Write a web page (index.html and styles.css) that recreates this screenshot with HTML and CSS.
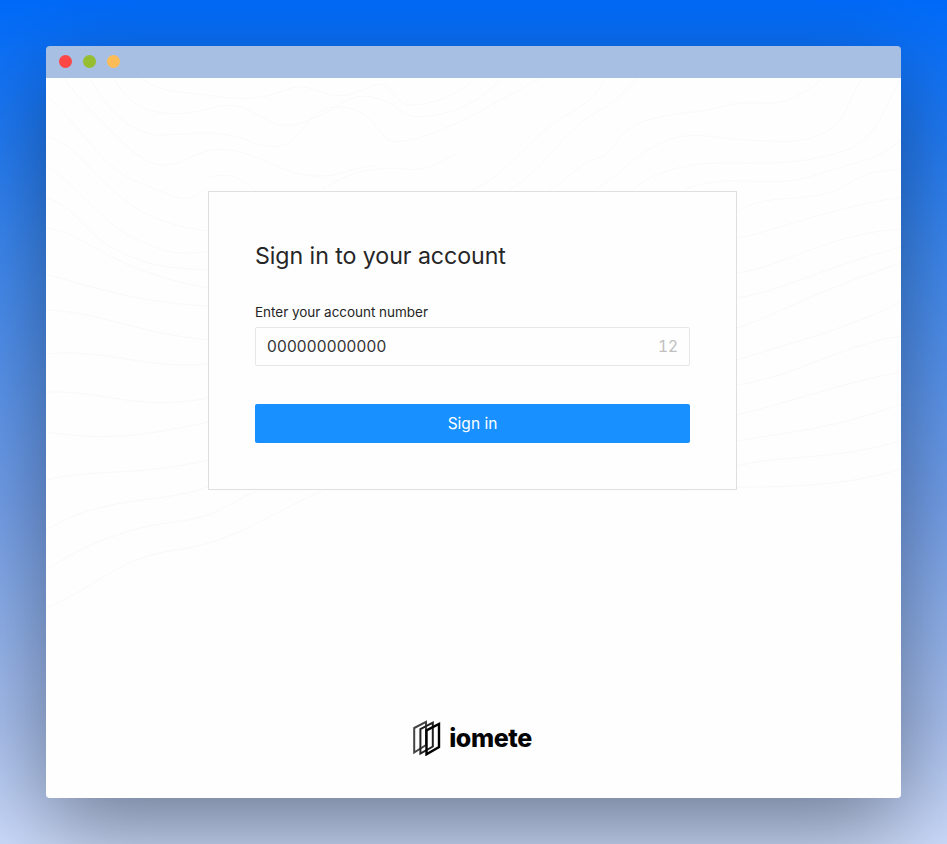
FILE: index.html
```html
<!DOCTYPE html>
<html lang="en">
<head>
<meta charset="utf-8">
<title>Sign in</title>
<link rel="stylesheet" href="styles.css">
</head>
<body>
<div class="window">
  <header class="titlebar">
    <span class="dot red"></span><span class="dot green"></span><span class="dot yellow"></span>
  </header>
  <main class="page">
    <svg class="contours" viewBox="0 0 855 720" aria-hidden="true">
      <path d="M0 17C45 60 55 90 94 105S140 128 162 109"/>
      <path d="M0 58C28 66 40 88 60 106S100 145 162 153"/>
      <path d="M0 88C36 110 54 145 90 161S130 176 162 174"/>
      <path d="M0 120C30 127 40 158 72 173S120 190 162 192"/>
      <path d="M0 150C45 156 55 190 162 210"/>
      <path d="M0 196C50 210 90 224 162 228"/>
      <path d="M0 232C50 233 90 255 162 262"/>
      <path d="M0 276C60 270 100 292 162 286"/>
      <path d="M0 314C60 312 90 334 162 320"/>
      <path d="M0 354C55 362 90 360 162 344"/>
      <path d="M0 402C50 390 90 399 162 382"/>
      <path d="M0 452C60 416 110 427 162 409"/>
      <path d="M0 492C40 466 80 450 128 444S180 426 210 413"/>
      <path d="M0 530C50 510 70 480 130 472S220 437 276 413"/>
      <path d="M18 0C35 24 62 51 83 70S121 91 139 82S174 66 204 77S246 98 272 98S300 91 330 87"/>
      <path d="M44 0C58 28 85 57 113 57S149 53 176 56S213 72 235 68S260 30 290 29S330 50 340 60S390 58 444 28S480 7 498 0"/>
      <path d="M68 0C83 30 108 38 140 35S181 19 210 36S247 49 271 39S302 13 330 20S352 42 383 38S433 23 456 0"/>
      <path d="M96 0C115 16 137 13 161 17S206 23 228 16S251 5 276 14S311 13 329 7S346 28 367 27S412 17 430 0"/>
      <path d="M160 101C184 91 196 103 209 112M276 112C301 93 334 88 360 91S394 81 412 76"/>
      <path d="M426 112C466 94 482 59 519 38S550 12 560 0"/>
      <path d="M462 112C500 92 511 58 546 37S574 16 592 0"/>
      <path d="M503 112C520 103 533 85 552 80S569 51 602 42S650 36 678 28S728 32 751 18S770 7 776 0"/>
      <path d="M548 112C576 97 586 77 617 64S667 61 700 62S752 67 778 55S800 20 817 0"/>
      <path d="M587 112C608 92 643 85 680 85S748 87 788 76S830 47 855 0"/>
      <path d="M638 112C679 93 725 112 767 98S833 82 855 62"/>
      <path d="M691 133C729 112 766 128 800 107S839 96 855 91"/>
      <path d="M691 160C735 152 770 133 855 119M691 195C740 188 780 156 855 151"/>
      <path d="M691 220C739 212 767 193 855 169M691 250C731 237 765 215 855 185"/>
      <path d="M691 282C739 266 794 254 855 224M691 307C747 299 799 266 855 258"/>
      <path d="M691 337C745 324 795 305 855 294M691 363C750 353 790 350 855 326"/>
      <path d="M691 388C740 376 785 383 855 363M635 413C700 404 770 417 855 391"/>
    </svg>
    <form class="card">
      <h1>Sign in to your account</h1>
      <label for="account">Enter your account number</label>
      <div class="field">
        <input id="account" type="text" value="000000000000"><span>12</span>
      </div>
      <button type="button">Sign in</button>
    </form>
    <div class="brand">
      <svg class="mark" viewBox="0 0 28 36" aria-hidden="true">
        <path class="back" d="M1.2 8 13 1.8V25L1.2 32.5Z"/>
        <path class="middle" d="M7.4 9.2 19.8 2.6V26.5L7.4 33.5Z"/>
        <path class="front" d="M13.5 10.4 26 4V27L13.5 34.3Z"/>
      </svg>
      <span>iomete</span>
    </div>
  </main>
</div>
</body>
</html>
```
FILE: styles.css
```css
* { box-sizing: border-box; }
body {
  margin: 0;
  height: 844px;
  padding: 46px;
  overflow: hidden;
  font-family: Inter, sans-serif;
  background: linear-gradient(#006af8 0%, #3d88ef 30%, #739fe9 60%, #a6bfee 85%, #cbdafa 100%);
}
.window {
  width: 855px;
  height: 752px;
  border-radius: 4px;
  overflow: hidden;
  box-shadow: 0 30px 90px rgba(0, 0, 0, .4);
}
.titlebar {
  height: 32px;
  padding: 0 13px 1px;
  display: flex;
  align-items: center;
  gap: 11px;
  background: #a6bfe2;
}
.dot { width: 13px; height: 13px; border-radius: 50%; }
.red { background: #fc4744; }
.green { background: #97be30; }
.yellow { background: #febc57; }
.page {
  position: relative;
  height: 720px;
  padding-top: 113px;
  display: flex;
  flex-direction: column;
  align-items: center;
  background: #fefefe;
}
.contours {
  position: absolute;
  inset: 0;
  width: 855px;
  height: 720px;
  fill: none;
  stroke: #f9f9f9;
}
.card {
  position: relative;
  width: 529px;
  height: 299px;
  margin-right: 2px;
  padding: 48px 46px 0;
  border: 1px solid #dfdfdf;
  background: #fefefe;
}
h1 {
  margin: 0;
  font-size: 23.2px;
  letter-spacing: -.07px;
  line-height: 32px;
  font-weight: 400;
  color: #262626;
}
label {
  display: block;
  margin-top: 30px;
  font-size: 13.5px;
  letter-spacing: -.03px;
  line-height: 20px;
  color: #262626;
}
.field {
  display: flex;
  align-items: center;
  height: 39px;
  margin-top: 5px;
  padding: 0 11px;
  border: 1px solid #e7e7e7;
  border-radius: 2px;
}
.field input {
  flex: 1;
  min-width: 0;
  padding: 0;
  border: 0;
  outline: 0;
  background: transparent;
  font: 400 15.5px Inter, sans-serif;
  letter-spacing: .17px;
  color: #333;
}
.field span {
  font-size: 15.5px;
  font-variant-numeric: tabular-nums;
  color: #bfbfbf;
}
button {
  display: block;
  width: 100%;
  height: 39px;
  margin-top: 38px;
  padding: 0;
  border: 0;
  border-radius: 2px;
  background: #1890ff;
  color: #fff;
  font: 400 15.5px Inter, sans-serif;
}
.brand {
  display: flex;
  align-items: center;
  gap: 8px;
  height: 36px;
  margin-top: 230px;
  margin-right: 2px;
  font-size: 25px;
  font-weight: 800;
  letter-spacing: -.4px;
  color: #050505;
}
.mark { width: 28px; height: 36px; fill: none; stroke-width: 2; }
.back { stroke: #444; }
.middle { stroke: #222; }
.front { stroke: #000; stroke-width: 2.4; }
```
